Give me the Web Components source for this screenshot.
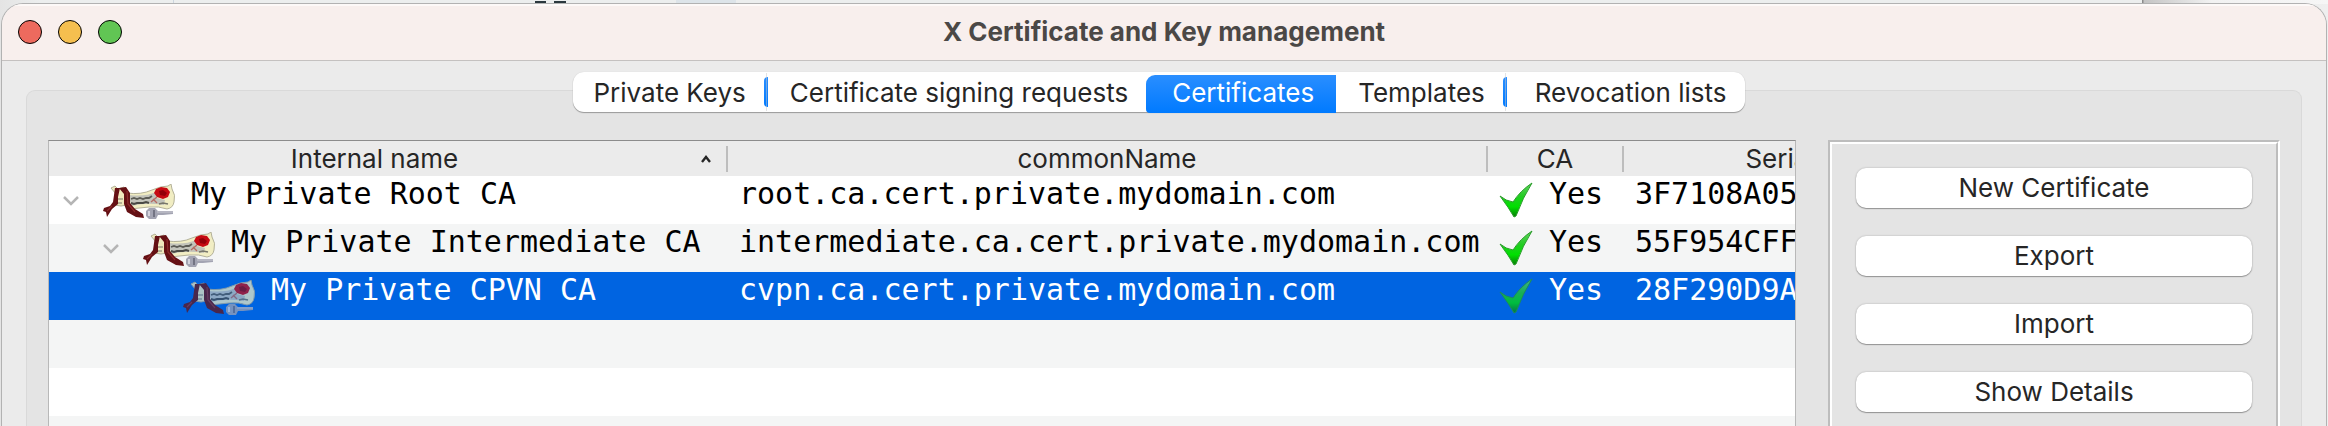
<!DOCTYPE html>
<html lang="en">
<head>
<meta charset="utf-8">
<title>X Certificate and Key management</title>
<style>
    html, body {
        margin: 0;
        height: 100%;
        overflow: hidden;
    }
    body {
        font-family: Inter, "Liberation Sans", sans-serif;
        font-size: 26px;
        color: #262626;
        /* slivers of the windows that lie behind this one */
        background:
            linear-gradient(#2b383e, #2b383e) 535px 1px / 11px 2px no-repeat,
            linear-gradient(#2b383e, #2b383e) 554px 1px / 12px 2px no-repeat,
            linear-gradient(#dde4e9, #dde4e9) 676px 0 / 60px 4px no-repeat,
            linear-gradient(#ccd5de, #ccd5de) 173px 0 / 1px 4px no-repeat,
            linear-gradient(90deg, #8c8c8c, #8c8c8c 1px, #c4c4c4 2px, #f2f2f2 70px, #f6f6f6) 2142px 0 / 186px 4px no-repeat,
            linear-gradient(90deg, #e4e4e4, #eceeee 40px, #eceeee calc(100% - 40px), #efefef);
    }
</style>
</head>
<body>
<app-window heading="X Certificate and Key management">
    <tab-bar>
        <tab-item>Private Keys</tab-item>
        <tab-item divider>Certificate signing requests</tab-item>
        <tab-item selected>Certificates</tab-item>
        <tab-item>Templates</tab-item>
        <tab-item divider>Revocation lists</tab-item>
    </tab-bar>
    <tab-panel>
        <cert-tree></cert-tree>
        <action-panel slot="side">
            <action-button>New Certificate</action-button>
            <action-button>Export</action-button>
            <action-button>Import</action-button>
            <action-button>Show Details</action-button>
        </action-panel>
    </tab-panel>
</app-window>

<script>
class AppWindow extends HTMLElement {
    constructor() {
        super();
        this.attachShadow({ mode: 'open' });
    }

    connectedCallback() {
        this.shadowRoot.innerHTML = `
            <style>
                :host {
                    display: flex;
                    flex-direction: column;
                    box-sizing: border-box;
                    height: calc(100vh - 3px);
                    margin: 3px 1px 0;
                    border: 1px solid #b2b2b2;
                    border-bottom: none;
                    border-radius: 22px 22px 0 0;
                    background: #ebebeb;
                    overflow: hidden;
                }
                header {
                    flex: none;
                    display: grid;
                    grid-template-columns: 1fr auto 1fr;
                    align-items: center;
                    height: 56px;
                    padding: 0 16px;
                    background: #f8efed;
                    border-bottom: 1px solid #c4c1c0;
                    box-shadow: inset 0 2px 0 #fdf9f8;
                }
                .lights {
                    display: flex;
                    gap: 16px;
                }
                .lights button {
                    box-sizing: border-box;
                    width: 24px;
                    height: 24px;
                    padding: 0;
                    border: 1px solid;
                    border-radius: 50%;
                }
                .close { background: #ed6a5e; border-color: #d5594f; }
                .minimize { background: #f5bf4f; border-color: #dba63a; }
                .zoom { background: #61c554; border-color: #4fab43; }
                h1 {
                    margin: 0;
                    font-size: 26px;
                    line-height: 32px;
                    font-weight: 700;
                    color: #4b4846;
                }
                main {
                    flex: 1;
                    display: flex;
                    flex-direction: column;
                    padding: 11px 24px 0;
                }
            </style>
            <header>
                <div class="lights">
                    <button type="button" class="close" aria-label="Close"></button>
                    <button type="button" class="minimize" aria-label="Minimize"></button>
                    <button type="button" class="zoom" aria-label="Zoom"></button>
                </div>
                <h1>${this.getAttribute('heading')}</h1>
            </header>
            <main><slot></slot></main>
        `;
    }
}

class TabBar extends HTMLElement {
    constructor() {
        super();
        this.attachShadow({ mode: 'open' });
    }

    connectedCallback() {
        this.setAttribute('role', 'tablist');
        this.shadowRoot.innerHTML = `
            <style>
                :host {
                    flex: none;
                    display: flex;
                    align-self: center;
                    height: 40px;
                    margin: 0 10px -22px 0;
                    border-radius: 11px;
                    background: #fff;
                    box-shadow: 0 1px 1px rgba(0, 0, 0, 0.32), 0 0 1px rgba(0, 0, 0, 0.15);
                    z-index: 1;
                }
            </style>
            <slot></slot>
        `;
    }
}

class TabItem extends HTMLElement {
    constructor() {
        super();
        this.attachShadow({ mode: 'open' });
    }

    connectedCallback() {
        const selected = this.hasAttribute('selected');

        this.shadowRoot.innerHTML = `
            <style>
                :host {
                    display: flex;
                    position: relative;
                }
                button {
                    box-sizing: border-box;
                    height: 40px;
                    border: none;
                    padding: 0 22px;
                    background: none;
                    font: inherit;
                    color: inherit;
                }
                :host(:first-child) button {
                    padding: 0 22px 0 20px;
                }
                :host(:last-child) button {
                    padding: 0 18px 0 28px;
                }
                :host([selected]) button {
                    height: 38px;
                    margin: 3px 0 0 -4px;
                    padding: 0 22px 4px 26px;
                    color: #fff;
                    background: linear-gradient(#2a8eff, #007aff);
                    border-radius: 9px 0 0 4px;
                }
                /* edge of the selection pill and the hairline over it */
                :host([divider])::before {
                    content: "";
                    position: absolute;
                    left: -4px;
                    top: 5px;
                    width: 4px;
                    height: 30px;
                    border-radius: 4px 0 0 4px;
                    background: linear-gradient(#2a8eff, #007aff);
                }
                :host([divider])::after {
                    content: "";
                    position: absolute;
                    left: -2px;
                    top: 1px;
                    width: 1px;
                    height: 38px;
                    background: rgba(200, 200, 200, 0.5);
                }
            </style>
            <button type="button" role="tab" aria-selected="${selected}"><slot></slot></button>
        `;
    }
}

class TabPanel extends HTMLElement {
    constructor() {
        super();
        this.attachShadow({ mode: 'open' });
    }

    connectedCallback() {
        this.shadowRoot.innerHTML = `
            <style>
                :host {
                    flex: 1;
                    display: grid;
                    grid-template-columns: minmax(0, 1fr) 452px;
                    column-gap: 32px;
                    padding: 49px 21px 0;
                    border: 1px solid #d9d9d9;
                    border-bottom: none;
                    border-radius: 9px 9px 0 0;
                    background: #e4e4e4;
                }
            </style>
            <slot></slot>
            <slot name="side"></slot>
        `;
    }
}

class CertIcon extends HTMLElement {
    constructor() {
        super();
        this.attachShadow({ mode: 'open' });
    }

    connectedCallback() {
        this.shadowRoot.innerHTML = `
            <style>
                :host { display: block; width: 72px; height: 36px; }
                svg { display: block; }
            </style>
            <svg width="72" height="36" viewBox="0 0 72 36" aria-hidden="true">
                <path d="M8 4 L12 2 L15 5 L21 3 L25 8 L24 21 L18 22 L11 21 L13 10 Z" fill="#efe8bd" stroke="#b3b199" stroke-width="1"/>
                <path d="M14 15h6M14 19h5" stroke="#a19d86" stroke-width="1.6"/>
                <path d="M24 9 Q38 11 49 6 Q58 2 65 2 L68 0 L69 5 Q73 11 71 18 Q70 24 64 25 Q56 22 46 23 L27 25 Z" fill="#f1edc3" stroke="#b3b199" stroke-width="1"/>
                <path d="M26 11 Q42 13 53 8 L54 14 L62 16 L61 21 Q44 18 28 22 Z" fill="#c2c3ba"/>
                <path d="M28 15l3-1 3 1 3-1 3 1 3-1 3 0 3-2" fill="none" stroke="#5c5c55" stroke-width="1.8"/>
                <path d="M28 19l3 1 3-1 3 0 3 0 3-1 3 1" fill="none" stroke="#4a4a45" stroke-width="2"/>
                <path d="M56 20l4-1 5 1" fill="none" stroke="#77766b" stroke-width="1.6"/>
                <path d="M54 13 L48 18 M50 15 L54 19" fill="none" stroke="#b56a62" stroke-width="1.3"/>
                <path d="M53 5 L58 3 L64 4 L67 8 L65 13 L60 15 L54 13 L51 9 Z" fill="#c60a12"/>
                <path d="M56 7l4-1 4 3-2 3-5-1z" fill="#930008"/>
                <path d="M12 4 L17 4 L15 13 L15 20 L9 25 L4 33 L3 28 L0 27 L1 24 L7 22 L10 18 Z" fill="#651014"/>
                <path d="M16 4 L23 3 L27 9 L27 19 L32 25 L40 30 L41 34 L33 33 L24 28 L21 20 L21 10 Z" fill="#651014"/>
                <path d="M24 7l1 13 7 8M9 22l-5 5" fill="none" stroke="#8d2b2c" stroke-width="1.2"/>
                <path d="M43 27 L46 24 L52 24 L55 27 L70 27 L70 30 L60 31 L55 31 L53 35 L46 35 L43 32 Z" fill="#a3a4b2"/>
                <path d="M46 27v5" stroke="#d4d4de" stroke-width="2"/>
                <path d="M51 26v7" stroke="#737483" stroke-width="2"/>
                <path d="M54 28h16" stroke="#c9c9d2" stroke-width="1"/>
            </svg>
        `;
    }
}

class CheckIcon extends HTMLElement {
    constructor() {
        super();
        this.attachShadow({ mode: 'open' });
    }

    connectedCallback() {
        this.shadowRoot.innerHTML = `
            <style>
                :host { display: block; width: 34px; height: 36px; }
                svg { display: block; }
            </style>
            <svg width="34" height="36" viewBox="0 0 34 36" aria-hidden="true">
                <defs>
                    <linearGradient id="g" x1="0" y1="0" x2="0" y2="1">
                        <stop offset="0" stop-color="#5fd35f"/>
                        <stop offset="0.4" stop-color="#22cc22"/>
                        <stop offset="0.7" stop-color="#00e000"/>
                        <stop offset="1" stop-color="#087a08"/>
                    </linearGradient>
                </defs>
                <path d="M1 14 Q7 19 14 20 Q21 9 33 1 Q24 15 17 34 L15 35 Q10 26 1 14 Z" fill="url(#g)" stroke="#279c27" stroke-width="1"/>
            </svg>
        `;
    }
}

const CERTS = [
    { name: 'My Private Root CA', commonName: 'root.ca.cert.private.mydomain.com', ca: 'Yes', serial: '3F7108A05', level: 0, open: true },
    { name: 'My Private Intermediate CA', commonName: 'intermediate.ca.cert.private.mydomain.com', ca: 'Yes', serial: '55F954CFF', level: 1, open: true },
    { name: 'My Private CPVN CA', commonName: 'cvpn.ca.cert.private.mydomain.com', ca: 'Yes', serial: '28F290D9A', level: 2, selected: true }
];

class CertTree extends HTMLElement {
    constructor() {
        super();
        this.attachShadow({ mode: 'open' });
    }

    connectedCallback() {
        this.render();
    }

    renderRow(cert) {
        const toggle = cert.open
            ? `<button type="button" aria-label="Collapse ${cert.name}">
                   <svg width="16" height="10" viewBox="0 0 16 10"><path d="M1 1 L8 8 L15 1" fill="none" stroke="#b5b5b5" stroke-width="2.5"/></svg>
               </button>`
            : '<span class="leaf"></span>';

        return `
            <tr class="${cert.selected ? 'selected' : ''}">
                <td><div class="cell name" style="--level: ${cert.level}">${toggle}<cert-icon></cert-icon><span>${cert.name}</span></div></td>
                <td><div class="cell">${cert.commonName}</div></td>
                <td><div class="cell"><check-icon></check-icon><span>${cert.ca}</span></div></td>
                <td><div class="cell">${cert.serial}</div></td>
            </tr>
        `;
    }

    render() {
        this.shadowRoot.innerHTML = `
            <style>
                :host {
                    display: block;
                    border: 1px solid #b8b8b8;
                    border-top-color: #8c8c8c;
                    border-bottom: none;
                    overflow: hidden;
                    background: repeating-linear-gradient(#fff 0 48px, #f4f5f5 48px 96px) 0 35px;
                }
                table {
                    width: 1889px;
                    table-layout: fixed;
                    border-collapse: collapse;
                }
                .col-name { width: 679px; }
                .col-common { width: 760px; }
                .col-ca { width: 136px; }
                th {
                    height: 35px;
                    padding: 0;
                    font-weight: 400;
                    background: #ebebeb;
                }
                th div {
                    display: flex;
                    align-items: center;
                    justify-content: center;
                    height: 26px;
                    line-height: 26px;
                    border-right: 2px solid #bdbdbd;
                }
                th span {
                    flex: 1;
                }
                th svg {
                    margin-right: 14px;
                }
                td {
                    height: 48px;
                    padding: 0;
                    vertical-align: top;
                    font-family: "DejaVu Sans Mono", monospace;
                    font-size: 30px;
                    line-height: 35px;
                    color: #000;
                    white-space: nowrap;
                }
                .selected td {
                    background: #0064e1;
                    color: #fff;
                }
                .selected cert-icon,
                .selected check-icon {
                    opacity: 0.72;
                }
                .cell {
                    display: flex;
                    gap: 16px;
                    padding-left: 11px;
                }
                .name {
                    padding-left: calc(14px + var(--level) * 40px);
                }
                button, .leaf {
                    width: 16px;
                    margin: 20px 8px 0 0;
                }
                button {
                    height: 10px;
                    padding: 0;
                    border: none;
                    background: none;
                }
                button svg {
                    display: block;
                }
                cert-icon {
                    margin-top: 8px;
                }
                check-icon {
                    margin-top: 6px;
                }
            </style>
            <table>
                <colgroup><col class="col-name"><col class="col-common"><col class="col-ca"><col></colgroup>
                <thead>
                    <tr>
                        <th aria-sort="ascending"><div><span>Internal name</span><svg width="12" height="8" viewBox="0 0 12 8"><path d="M2 7 L6 2 L10 7" fill="none" stroke="#262626" stroke-width="2.4"/></svg></div></th>
                        <th><div><span>commonName</span></div></th>
                        <th><div><span>CA</span></div></th>
                        <th><div><span>Serial</span></div></th>
                    </tr>
                </thead>
                <tbody>${CERTS.map(cert => this.renderRow(cert)).join('')}</tbody>
            </table>
        `;
    }
}

class ActionPanel extends HTMLElement {
    constructor() {
        super();
        this.attachShadow({ mode: 'open' });
    }

    connectedCallback() {
        this.shadowRoot.innerHTML = `
            <style>
                :host {
                    display: flex;
                    border: 2px solid;
                    border-color: #bdbdbd #fff #fff #bdbdbd;
                    border-bottom: none;
                }
                .inner {
                    flex: 1;
                    display: flex;
                    flex-direction: column;
                    gap: 28px;
                    padding: 24px;
                    border: 2px solid;
                    border-color: #fff #bdbdbd #bdbdbd #fff;
                    border-bottom: none;
                }
            </style>
            <div class="inner"><slot></slot></div>
        `;
    }
}

class ActionButton extends HTMLElement {
    constructor() {
        super();
        this.attachShadow({ mode: 'open' });
    }

    connectedCallback() {
        this.shadowRoot.innerHTML = `
            <style>
                :host {
                    display: block;
                }
                button {
                    display: block;
                    width: 100%;
                    height: 40px;
                    padding: 0 0 2px;
                    border: none;
                    border-radius: 10px;
                    background: #fff;
                    font: inherit;
                    color: inherit;
                    box-shadow: 0 1px 1px rgba(0, 0, 0, 0.3), 0 0 2px rgba(0, 0, 0, 0.25);
                }
            </style>
            <button type="button"><slot></slot></button>
        `;
    }
}

customElements.define('app-window', AppWindow);
customElements.define('tab-bar', TabBar);
customElements.define('tab-item', TabItem);
customElements.define('tab-panel', TabPanel);
customElements.define('cert-icon', CertIcon);
customElements.define('check-icon', CheckIcon);
customElements.define('cert-tree', CertTree);
customElements.define('action-panel', ActionPanel);
customElements.define('action-button', ActionButton);
</script>
</body>
</html>
